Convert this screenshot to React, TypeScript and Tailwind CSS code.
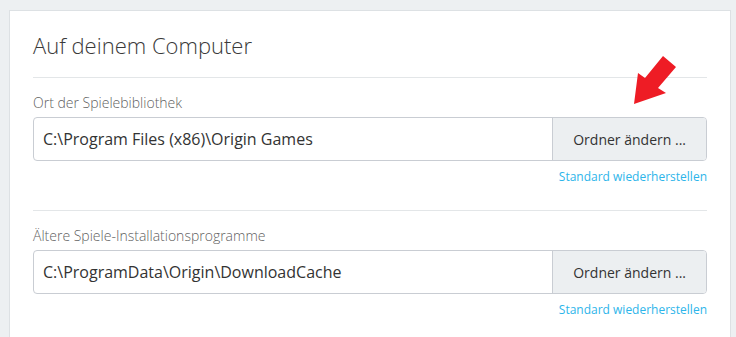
export default function App() {
  const sections = [
    { label: "Ort der Spielebibliothek", path: "C:\\Program Files (x86)\\Origin Games" },
    { label: "Ältere Spiele-Installationsprogramme", path: "C:\\ProgramData\\Origin\\DownloadCache" },
  ];

  return (
    <div
      className="relative h-[337px] w-[736px] overflow-hidden bg-[#edf0f2] pt-[10px] pl-[9px]"
      style={{ fontFamily: '"Open Sans", "Liberation Sans", sans-serif' }}
    >
      <div className="w-[722px] border border-[#dde1e4] bg-white px-[23px] pt-[19px] pb-6">
        <h1 className="text-[22px] font-light leading-[30px] text-[#3a3a3a]">Auf deinem Computer</h1>

        {sections.map((s) => (
          <div key={s.label} className="mt-[17px] border-t border-[#e3e6e8] pt-[15px] [&+&]:mt-[26px]">
            <div className="text-[14px] font-light leading-[20px] text-[#5f5f5f]">{s.label}</div>
            <div className="mt-[4px] flex h-[44px] overflow-hidden rounded-[4px] border border-[#c9cdd3]">
              <div className="flex flex-1 items-center pl-[9px] text-[16px] text-[#333]">{s.path}</div>
              <button className="flex items-center border-l border-[#c9cdd3] bg-[#eceff1] px-[20px] text-[14px] text-[#333]">
                Ordner ändern ...
              </button>
            </div>
            <div className="mt-[8px] text-right text-[12px] leading-[15px] text-[#2db5ea]">
              Standard wiederherstellen
            </div>
          </div>
        ))}
      </div>

      <svg className="absolute left-0 top-0" width="736" height="337" viewBox="0 0 736 337">
        <polygon
          points="663,56 676,67 658,88 666,93 634,104 638,73 645,78"
          fill="#ee1c25"
        />
      </svg>
    </div>
  );
}
